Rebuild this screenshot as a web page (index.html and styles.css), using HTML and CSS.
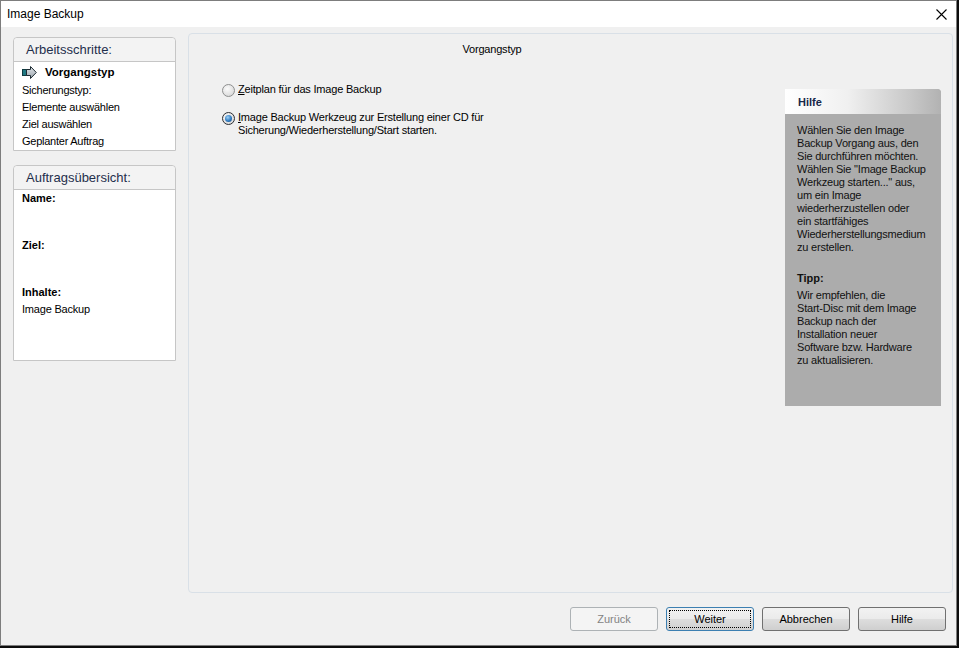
FILE: index.html
```html
<!DOCTYPE html>
<html lang="de">
<head>
<meta charset="utf-8">
<title>Image Backup</title>
<link rel="stylesheet" href="styles.css">
</head>
<body>
<div class="window">
  <div class="titlebar">
    <span class="title">Image Backup</span>
    <span class="close">
      <svg width="11" height="11" viewBox="0 0 11 11"><path d="M0.5 0.5 L10.5 10.5 M10.5 0.5 L0.5 10.5" stroke="#000" stroke-width="1.1" fill="none"/></svg>
    </span>
  </div>
  <div class="content">
    <div class="sidebar">
      <div class="box steps">
        <div class="box-head">Arbeitsschritte:</div>
        <div class="box-body">
          <div class="step current">
            <svg class="arrow" width="15" height="13" viewBox="0 0 15 13">
              <defs>
                <linearGradient id="ag" x1="0" y1="0" x2="0" y2="1">
                  <stop offset="0" stop-color="#e4e8ec"/>
                  <stop offset="1" stop-color="#9aa3ab"/>
                </linearGradient>
              </defs>
              <rect x="0.5" y="3.5" width="4" height="6" fill="#1f7882" stroke="#0d3a40"/>
              <path d="M4.5 3.5 H8.5 V0.5 L14.3 6.5 L8.5 12.5 V9.5 H4.5 Z" fill="url(#ag)" stroke="#1d2b33"/>
            </svg>
            <span>Vorgangstyp</span>
          </div>
          <div class="step">Sicherungstyp:</div>
          <div class="step">Elemente auswählen</div>
          <div class="step">Ziel auswählen</div>
          <div class="step">Geplanter Auftrag</div>
        </div>
      </div>
      <div class="box summary">
        <div class="box-head">Auftragsübersicht:</div>
        <div class="box-body">
          <div class="sum-label">Name:</div>
          <div class="sum-value"></div>
          <div class="sum-label">Ziel:</div>
          <div class="sum-value"></div>
          <div class="sum-label">Inhalte:</div>
          <div class="sum-text">Image Backup</div>
        </div>
      </div>
    </div>
    <div class="main">
      <div class="panel">
        <div class="options">
          <div class="panel-title">Vorgangstyp</div>
          <label class="radio-row first">
            <span class="radio"></span>
            <span><u>Z</u>eitplan für das Image Backup</span>
          </label>
          <label class="radio-row">
            <span class="radio checked"></span>
            <span><u>I</u>mage Backup Werkzeug zur Erstellung einer CD für<br>Sicherung/Wiederherstellung/Start starten.</span>
          </label>
        </div>
        <div class="help">
          <div class="help-head">Hilfe</div>
          <div class="help-body">
            <p>Wählen Sie den Image<br>Backup Vorgang aus, den<br>Sie durchführen möchten.<br>Wählen Sie "Image Backup<br>Werkzeug starten..." aus,<br>um ein Image<br>wiederherzustellen oder<br>ein startfähiges<br>Wiederherstellungsmedium<br>zu erstellen.</p>
            <p class="tip-head">Tipp:</p>
            <p class="tip">Wir empfehlen, die<br>Start-Disc mit dem Image<br>Backup nach der<br>Installation neuer<br>Software bzw. Hardware<br>zu aktualisieren.</p>
          </div>
        </div>
      </div>
      <div class="buttons">
        <button class="btn" disabled>Zurück</button>
        <button class="btn default"><span class="focus">Weiter</span></button>
        <button class="btn">Abbrechen</button>
        <button class="btn">Hilfe</button>
      </div>
    </div>
  </div>
</div>
</body>
</html>
```

FILE: styles.css
```css
html, body {
  margin: 0;
  padding: 0;
}
body {
  width: 959px;
  height: 648px;
  background: #0c0c0c;
  font-family: "Liberation Sans", Arial, sans-serif;
  font-size: 11px;
  color: #000;
  overflow: hidden;
}
.window {
  width: 955px;
  height: 644px;
  border: 1px solid #7d7d7d;
  background: #f0f0f0;
  display: flex;
  flex-direction: column;
}
.titlebar {
  height: 26px;
  background: #fff;
  display: flex;
  align-items: center;
  justify-content: space-between;
  padding-left: 6px;
  font-size: 12px;
  flex: none;
}
.close {
  width: 30px;
  height: 26px;
  display: flex;
  align-items: center;
  justify-content: center;
}
.content {
  flex: 1;
  display: flex;
  gap: 12px;
  padding: 6px 3px 0 12px;
}
.sidebar {
  width: 163px;
  margin-top: 4px;
  display: flex;
  flex-direction: column;
  gap: 14px;
}
.box {
  border: 1px solid #c6c6c6;
  border-radius: 4px 4px 0 0;
  background: #fff;
}
.box-head {
  height: 23px;
  line-height: 24px;
  background: #f3f3f3;
  border-bottom: 1px solid #c6c6c6;
  border-radius: 4px 4px 0 0;
  padding-left: 12px;
  font-size: 13px;
  color: #1f2f4c;
}
.steps .box-body {
  height: 88px;
}
.step {
  height: 17px;
  line-height: 17px;
  padding-left: 8px;
  letter-spacing: -0.25px;
}
.step.current {
  height: 20px;
  display: flex;
  align-items: center;
  font-weight: bold;
  font-size: 11.5px;
  letter-spacing: 0;
}
.arrow {
  margin-right: 8px;
  flex: none;
}
.summary .box-body {
  height: 170px;
  padding-left: 8px;
}
.sum-label {
  font-weight: bold;
  height: 17px;
  line-height: 17px;
}
.sum-value {
  height: 30px;
}
.sum-text {
  height: 17px;
  line-height: 17px;
  letter-spacing: -0.2px;
}
.main {
  width: 765px;
  display: flex;
  flex-direction: column;
}
.panel {
  height: 558px;
  border: 1px solid #d9e0e7;
  border-radius: 4px;
  display: flex;
}
.options {
  flex: 1;
  display: flex;
  flex-direction: column;
  letter-spacing: -0.2px;
}
.panel-title {
  padding-top: 8px;
  padding-left: 10px;
  line-height: 14px;
  text-align: center;
}
.radio-row {
  display: flex;
  align-items: flex-start;
  padding-left: 33px;
  line-height: 13px;
  margin-top: 14px;
}
.radio-row.first {
  margin-top: 27px;
}
.radio-row u {
  text-decoration: underline;
}
.radio {
  width: 11px;
  height: 11px;
  margin-top: 1px;
  border: 1px solid #8e8f8f;
  border-radius: 50%;
  background: radial-gradient(circle at 40% 35%, #fafafa 0%, #e6e6e6 50%, #cfd0d0 100%);
  margin-right: 3px;
  flex: none;
  position: relative;
}
.radio.checked {
  border-color: #2c2f33;
}
.radio.checked::after {
  content: "";
  position: absolute;
  left: 2px;
  top: 2px;
  width: 7px;
  height: 7px;
  border-radius: 50%;
  background: radial-gradient(circle at 40% 35%, #9fd2f7 0%, #2f7bc1 55%, #13467e 100%);
}
.help {
  width: 156px;
  height: 317px;
  margin: 55px 11px 0 0;
  background: #acacac;
  border-radius: 0 4px 0 0;
  flex: none;
}
.help-head {
  height: 25px;
  line-height: 26px;
  padding-left: 13px;
  font-weight: bold;
  color: #17284a;
  background: linear-gradient(to right, #ffffff 0%, #f0f0f0 40%, #c8c8c8 80%, #b2b2b2 100%);
  border-radius: 0 4px 0 0;
}
.help-body {
  padding: 10px 0 0 12px;
  line-height: 13px;
  color: #111;
  white-space: nowrap;
  letter-spacing: -0.2px;
}
.help-body p {
  margin: 0;
}
.help-body .tip-head {
  margin-top: 18px;
  font-weight: bold;
  letter-spacing: 0;
}
.help-body .tip {
  margin-top: 4px;
}
.buttons {
  display: flex;
  justify-content: flex-end;
  gap: 8px;
  padding-right: 7px;
  margin-top: 14px;
}
.btn {
  width: 88px;
  height: 24px;
  border: 1px solid #707070;
  border-radius: 3px;
  background: linear-gradient(to bottom, #f2f2f2 0%, #ebebeb 48%, #dddddd 52%, #cfcfcf 100%);
  font-family: "Liberation Sans", Arial, sans-serif;
  font-size: 11px;
  color: #000;
  padding: 0;
  display: flex;
  align-items: center;
  justify-content: center;
}
.btn:disabled {
  border-color: #adb2b5;
  background: #f4f4f4;
  color: #838383;
}
.btn.default {
  border-color: #3c7fb1;
  padding: 2px;
}
.focus {
  width: 100%;
  height: 100%;
  border: 1px dotted #000;
  box-sizing: border-box;
  display: flex;
  align-items: center;
  justify-content: center;
}
```
